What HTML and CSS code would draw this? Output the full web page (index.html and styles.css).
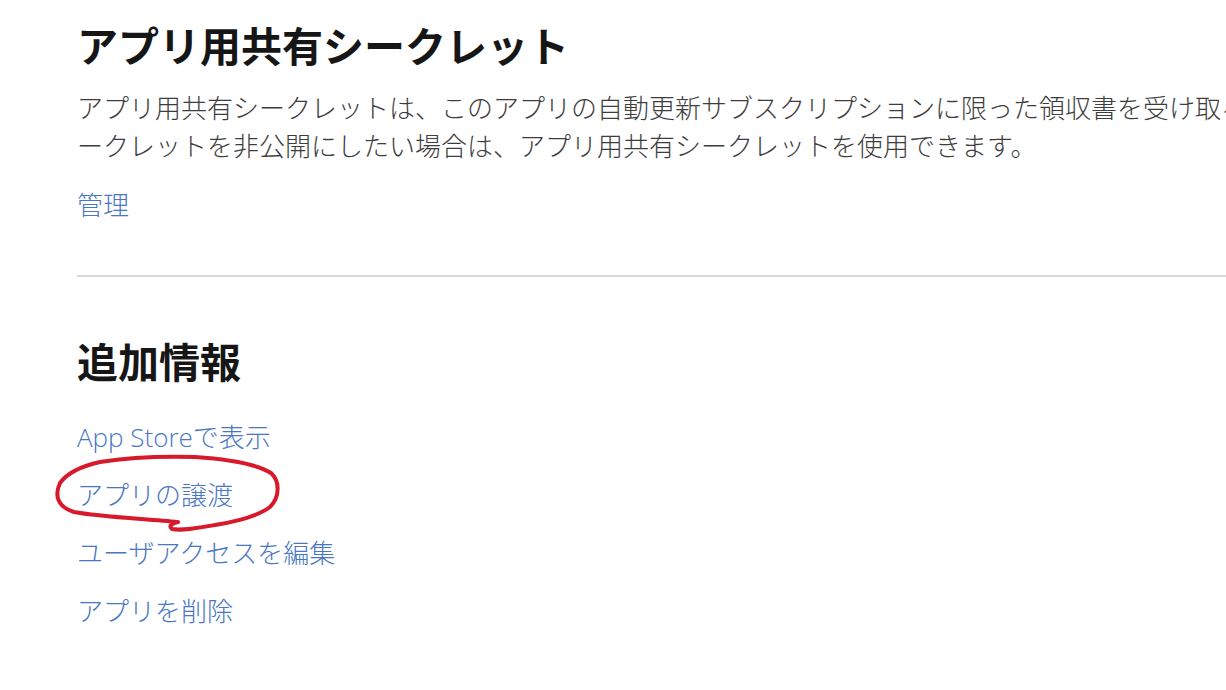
FILE: index.html
```html
<!DOCTYPE html>
<html lang="ja">
<head>
<meta charset="utf-8">
<title>アプリ用共有シークレット</title>
<link rel="stylesheet" href="styles.css">
</head>
<body>
<main class="page">
  <section class="section">
    <h1 class="title">アプリ用共有シークレット</h1>
    <p class="desc">アプリ用共有シークレットは、このアプリの自動更新サブスクリプションに限った領収書を受け取る<br>ークレットを非公開にしたい場合は、アプリ用共有シークレットを使用できます。</p>
    <a class="link" href="#">管理</a>
  </section>
  <hr class="rule">
  <section class="section">
    <h2 class="title title-2">追加情報</h2>
    <ul class="links">
      <li><a class="link" href="#">App Storeで表示</a></li>
      <li><a class="link" href="#">アプリの譲渡</a></li>
      <li><a class="link" href="#">ユーザアクセスを編集</a></li>
      <li><a class="link" href="#">アプリを削除</a></li>
    </ul>
  </section>
</main>
<svg class="markup" width="1226" height="690" viewBox="0 0 1226 690" aria-hidden="true">
  <path d="M177 522 C150 519 100 517 74 512 C58 507 54 496 60 483 C68 472 82 466 100 462 C125 458 160 456 195 457 C225 459 255 463 271 473 C280 481 280 497 270 507 C258 516 240 521 215 525 C198 528 182 531 172 529 C168 526 172 523 178 522" fill="none" stroke="#d8192b" stroke-width="4" stroke-linecap="round" stroke-linejoin="round"/>
</svg>
</body>
</html>
```
FILE: styles.css
```css
html, body {
  margin: 0;
  padding: 0;
  background: #ffffff;
  overflow: hidden;
}

body {
  width: 1226px;
  height: 690px;
  position: relative;
  font-family: "Open Sans", "Noto Sans CJK JP", sans-serif;
  color: #333333;
}

.page {
  width: 1400px;
  padding: 20px 0 0 77px;
  box-sizing: border-box;
}

.section {
  display: flex;
  flex-direction: column;
  align-items: flex-start;
}

.title {
  margin: 0;
  font-size: 41px;
  line-height: 48px;
  font-weight: 700;
  color: #161616;
  font-family: "Noto Sans CJK JP", sans-serif;
}

.title-2 {
  margin-top: 59px;
}

.desc {
  margin: 21px 0 0;
  font-size: 26px;
  line-height: 38px;
  font-weight: 300;
  white-space: nowrap;
  color: #3d3d3d;
}

.link {
  font-size: 26px;
  line-height: 38px;
  font-weight: 300;
  color: #4a77c4;
  text-decoration: none;
}

.desc + .link {
  margin-top: 21px;
}

.rule {
  margin: 51px 0 0;
  border: 0;
  height: 2px;
  background: #d9d9d9;
}

.links {
  list-style: none;
  margin: 34px 0 0;
  padding: 0;
  display: flex;
  flex-direction: column;
  gap: 20px;
}

.links li {
  line-height: 38px;
  height: 38px;
}

.markup {
  position: absolute;
  left: 0;
  top: 0;
  pointer-events: none;
}
```
